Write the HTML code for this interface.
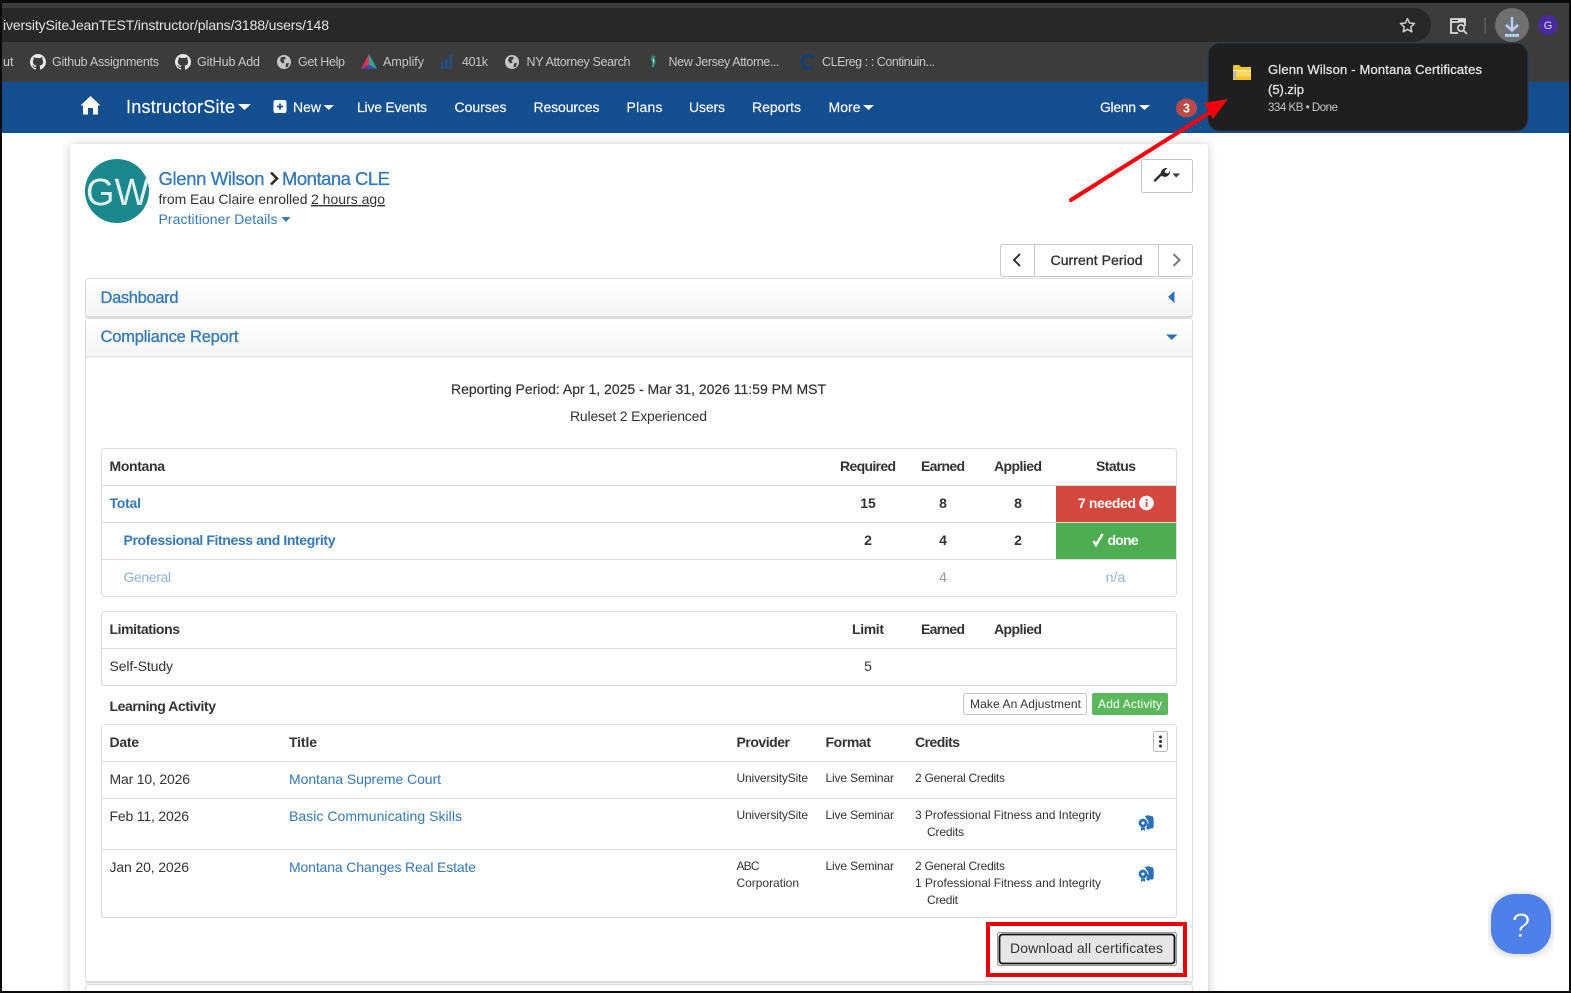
<!DOCTYPE html>
<html lang="en"><head><meta charset="utf-8"><title>InstructorSite</title>
<style>
html,body{margin:0;padding:0;background:#fff;width:1571px;height:993px;overflow:hidden}
svg{display:block;position:absolute;left:0;top:0}
text{font-family:"Liberation Sans",sans-serif;font-size:14px;fill:#333}
.b{font-weight:bold}
.m{stroke:#333;stroke-width:.35}
.a{fill:#337ab7}
.a.m{stroke:#337ab7;stroke-width:.3}
.p{stroke:#e3e3e3;stroke-width:.3}
.n{fill:#fff;stroke:#fff;stroke-width:.15}
.bm{fill:#c7c7c7;font-size:12.5px}
.s{font-size:12px}
.c{text-anchor:middle}
</style></head><body>
<svg width="1571" height="993" viewBox="0 0 1571 993" xmlns="http://www.w3.org/2000/svg">
<defs>
<filter id="sh" x="-5%" y="-5%" width="110%" height="110%"><feDropShadow dx="0" dy="1" stdDeviation="5" flood-color="#000" flood-opacity=".22"/></filter>
<linearGradient id="ph" x1="0" y1="0" x2="0" y2="1"><stop offset="0" stop-color="#fff"/><stop offset="1" stop-color="#f4f4f4"/></linearGradient>
<path id="gh" d="M8 0C3.58 0 0 3.58 0 8c0 3.54 2.29 6.53 5.47 7.59.4.07.55-.17.55-.38 0-.19-.01-.82-.01-1.49-2.01.37-2.53-.49-2.69-.94-.09-.23-.48-.94-.82-1.13-.28-.15-.68-.52-.01-.53.63-.01 1.08.58 1.23.82.72 1.21 1.87.87 2.33.66.07-.52.28-.87.51-1.07-1.78-.2-3.64-.89-3.64-3.95 0-.87.31-1.59.82-2.15-.08-.2-.36-1.02.08-2.12 0 0 .67-.21 2.2.82.64-.18 1.32-.27 2-.27.68 0 1.36.09 2 .27 1.53-1.04 2.2-.82 2.2-.82.44 1.1.16 1.92.08 2.12.51.56.82 1.27.82 2.15 0 3.07-1.87 3.75-3.65 3.95.29.25.54.73.54 1.48 0 1.07-.01 1.93-.01 2.2 0 .21.15.46.55.38A8.013 8.013 0 0016 8c0-4.42-3.58-8-8-8z" fill="#e8e8e8"/>
<g id="gl"><circle cx="7" cy="7" r="7" fill="#c4c7c5"/><path d="M4 2.2 8 1.6 8.8 4 6.4 5 7.6 7.2 5.6 8.6 3 5.6ZM9 8.4 12 8 11 11.6 8.6 12.6Z" fill="#3c3c3c"/></g>
<g id="aw"><path d="M7 1.5C8 .5 9.5 0 11 .5L15 1.5C15.6 3 16 6 15.6 11.5 15.6 13 15 13.5 14 13.5H8V3Z" fill="#2a72b5"/><circle cx="5" cy="8" r="4.9" fill="#2a72b5" stroke="#fff" stroke-width="1"/><circle cx="5" cy="8" r="1.5" fill="#fff"/><path d="M3 12.5V16L5 14.8 7 16V12.5Z" fill="#2a72b5"/><path d="M9 8 11.5 9.5V14.5H9Z" fill="#2a72b5"/></g>
</defs>

<rect width="1571" height="993" fill="#fff"/>

<!-- browser chrome -->
<rect x="0" y="0" width="1571" height="82" fill="#3c3c3c"/>
<path d="M0 8H1414a17 17 0 0 1 0 34H0Z" fill="#282828"/>
<text x="3" y="30" textLength="326" style="fill:#e3e3e3;font-size:14px">iversitySiteJeanTEST/instructor/plans/3188/users/148</text>
<path d="M1407.500 18.500l2 4.500 5 .5-3.700 3.400 1 4.900-4.300-2.500-4.300 2.500 1-4.900-3.700-3.400 5-.5Z" fill="none" stroke="#d0d0d0" stroke-width="1.500" stroke-linejoin="round"/>
<path d="M1465 26V19H1451V33H1458M1451 22H1459" fill="none" stroke="#dcdcdc" stroke-width="1.800"/><rect x="1458" y="19" width="8" height="3.500" fill="#dcdcdc"/><circle cx="1461" cy="28" r="3.200" fill="none" stroke="#dcdcdc" stroke-width="1.600"/><path d="M1463.500 30.500 1467 34" stroke="#dcdcdc" stroke-width="1.600"/>
<rect x="1484.500" y="17" width="1.500" height="17" fill="#5c5c5c"/>
<circle cx="1512" cy="25" r="17" fill="#6f7072"/>
<path d="M1512 17V30M1506 25 1512 30.500 1518 25" fill="none" stroke="#b3cdf3" stroke-width="2.600"/><rect x="1505" y="34" width="14" height="2.800" fill="#b3cdf3"/>
<circle cx="1548" cy="25" r="10" fill="#4a2a9f"/>
<text x="1548" y="29" class="c" style="fill:#e6e0f5;font-size:11px">G</text>

<!-- bookmarks -->
<text x="3" y="66" class="bm">ut</text>
<use href="#gh" x="30" y="54"/>
<text x="52" y="66" textLength="107" class="bm">Github Assignments</text>
<use href="#gh" x="175" y="54"/>
<text x="197" y="66" textLength="63" class="bm">GitHub Add</text>
<use href="#gl" x="277" y="55"/>
<text x="298" y="66" textLength="47" class="bm">Get Help</text>
<path d="M369 54 361 69 369 65Z" fill="#e8314a"/><path d="M369 54 377 69 369 65Z" fill="#2aa6a0"/><path d="M361 69 369 65 377 69Z" fill="#3a4cb0"/>
<text x="383" y="66" textLength="41" class="bm">Amplify</text>
<path d="M441 62h2.500v7H441ZM445 59h2.500v10H445ZM449.500 55h2.500v14h-2.500Z" fill="#22508f"/>
<text x="462" y="66" textLength="26" class="bm">401k</text>
<use href="#gl" x="505" y="55"/>
<text x="526.500" y="66" textLength="104" class="bm">NY Attorney Search</text>
<path d="M652 55.500 655.500 56 654.500 59.500 656 62 653.500 68 651.500 66 652.500 62 650.500 60Z" fill="#2b8f7c"/><path d="M653 58.500 654.500 60 653 64Z" fill="#e8e8e8"/>
<text x="668.500" y="66" textLength="111" class="bm">New Jersey Attorne...</text>
<path d="M813 57.500A6.500 6.500 0 1 0 813 66.500" fill="none" stroke="#0f4077" stroke-width="3"/><path d="M806 56 814 55" stroke="#0f4077" stroke-width="2"/>
<text x="822" y="66" textLength="113" class="bm">CLEreg : : Continuin...</text>

<!-- nav -->
<rect x="0" y="82" width="1571" height="51" fill="#134f8e"/>
<path d="M80.500 105.500 90.500 96 100.500 105.500 98 105.500V114.500H93V108H88V114.500H83V105.500Z" fill="#fff"/>
<text x="126" y="113" textLength="109" class="n" style="font-size:18px">InstructorSite</text>
<path d="M238 104H251L244.500 110Z" fill="#fff"/>
<rect x="273.500" y="100" width="13" height="13" rx="2" fill="#fff"/><path d="M280 103.500V109.500M277 106.500H283" stroke="#134f8e" stroke-width="1.800"/>
<text x="293" y="112" textLength="28" class="n">New</text><path d="M323.500 105H334L328.700 110Z" fill="#fff"/>
<text x="357" y="112" textLength="70" class="n">Live Events</text>
<text x="454.500" y="112" textLength="52" class="n">Courses</text>
<text x="533.500" y="112" textLength="66" class="n">Resources</text>
<text x="626.500" y="112" textLength="36" class="n">Plans</text>
<text x="689" y="112" textLength="36" class="n">Users</text>
<text x="752" y="112" textLength="49" class="n">Reports</text>
<text x="828.500" y="112" textLength="32" class="n">More</text><path d="M863 105H874L868.500 110Z" fill="#fff"/>
<text x="1100" y="112" textLength="36" class="n">Glenn</text><path d="M1139 105H1150L1144.500 110Z" fill="#fff"/>
<ellipse cx="1186.500" cy="108" rx="10.500" ry="9.500" fill="#b94a48"/>
<text x="1186.500" y="112.500" class="c b" style="fill:#fff;font-size:12.500px">3</text>

<!-- main card -->
<rect x="70" y="144" width="1138" height="860" rx="4" fill="#fff" filter="url(#sh)"/>
<circle cx="117" cy="191" r="32" fill="#1a888c"/>
<text x="86" y="205" textLength="63" style="fill:#e2f1f1;font-size:38px" lengthAdjust="spacingAndGlyphs">GW</text>
<text x="158.500" y="185" textLength="106" class="a m" style="font-size:18.500px">Glenn Wilson</text>
<path d="M271 172.500 277 178.500 271 184.500" fill="none" stroke="#2c2c2c" stroke-width="2.600"/>
<text x="282" y="185" textLength="108" class="a m" style="font-size:18.500px">Montana CLE</text>
<text x="158.500" y="204" textLength="149">from Eau Claire enrolled</text>
<text x="311" y="204" textLength="74" text-decoration="underline">2 hours ago</text>
<text x="158.500" y="224" textLength="119" class="a">Practitioner Details</text>
<path d="M281.500 217H290.500L286 222Z" fill="#337ab7"/>

<rect x="1141.500" y="159.500" width="51" height="33" rx="2" fill="#fff" stroke="#c4c4c4"/>
<path d="M1155 180.500 1162.500 173" stroke="#2b2b2b" stroke-width="2.300" stroke-linecap="round"/><path d="M1161 175.500C1160 171 1163 167.500 1167.500 168L1164.500 171 1165.500 173 1168 173.500 1170 171C1170.500 175 1166.500 178 1163 176.500Z" fill="#2b2b2b"/>
<path d="M1172.500 173.500H1180L1176.200 177.500Z" fill="#333"/>

<rect x="1000.500" y="244.500" width="192" height="32" rx="2" fill="#fff" stroke="#c8c8c8"/>
<path d="M1034.500 245V276M1158.500 245V276" stroke="#c8c8c8"/>
<path d="M1020 254 1014 260 1020 266" fill="none" stroke="#333" stroke-width="2"/>
<path d="M1173.500 254 1179.500 260 1173.500 266" fill="none" stroke="#777" stroke-width="2"/>
<text x="1050.500" y="265" textLength="92" class="m">Current Period</text>

<!-- panels -->
<rect x="85.500" y="278.500" width="1107" height="38" rx="3" fill="url(#ph)" stroke="#dcdcdc"/>
<rect x="85.500" y="316" width="1107" height="2" fill="#ddd"/>
<text x="100.500" y="303" textLength="78" class="a m" style="font-size:16.500px">Dashboard</text>
<path d="M1174.500 291V303L1168 297Z" fill="#2a72b5"/>
<rect x="85.500" y="318.500" width="1107" height="664" rx="3" fill="#fff" stroke="#dcdcdc"/>
<rect x="86" y="319" width="1106" height="37.500" fill="url(#ph)"/>
<rect x="86" y="356.500" width="1106" height="1" fill="#dcdcdc"/>
<text x="100.500" y="342" textLength="138" class="a m" style="font-size:16.500px">Compliance Report</text>
<path d="M1166 334.500H1177.500L1171.700 340Z" fill="#2a72b5"/>
<rect x="85.500" y="981" width="1107" height="2.500" fill="#dcdcdc"/>
<rect x="85.500" y="984.500" width="1107" height="20" rx="3" fill="#fff" stroke="#dcdcdc"/>

<text x="451" y="394" textLength="375" class="m" style="stroke-width:.2">Reporting Period: Apr 1, 2025 - Mar 31, 2026 11:59 PM MST</text>
<text x="570" y="421" textLength="137">Ruleset 2 Experienced</text>

<!-- table 1 -->
<rect x="101.500" y="448.500" width="1075" height="148" rx="3" fill="#fff" stroke="#ddd"/>
<path d="M102 485.500H1176M102 522.500H1176M102 559.500H1176" stroke="#ddd"/>
<text x="109.500" y="471" textLength="55.500" class="b">Montana</text>
<text x="840" y="471" textLength="56" class="b">Required</text>
<text x="921" y="471" textLength="44" class="b">Earned</text>
<text x="994" y="471" textLength="48" class="b">Applied</text>
<text x="1096" y="471" textLength="40" class="b">Status</text>
<text x="109.500" y="508" textLength="31.500" class="b a">Total</text>
<text x="868" y="508" class="b c">15</text><text x="943" y="508" class="b c">8</text><text x="1018" y="508" class="b c">8</text>
<rect x="1056" y="486" width="120" height="36" fill="#d4483f"/>
<text x="1078" y="508" textLength="58" class="b" style="fill:#fff">7 needed</text>
<circle cx="1146.500" cy="503" r="7.300" fill="#fff"/><rect x="1145.700" y="499" width="1.800" height="1.800" fill="#d4483f"/><rect x="1145.700" y="502" width="1.800" height="5" fill="#d4483f"/>
<text x="123.500" y="545" textLength="212" class="b a">Professional Fitness and Integrity</text>
<text x="868" y="545" class="b c">2</text><text x="943" y="545" class="b c">4</text><text x="1018" y="545" class="b c">2</text>
<rect x="1056" y="523" width="120" height="36" fill="#4cae50"/>
<path d="M1093.500 541 1096 545 1102.500 534" fill="none" stroke="#fff" stroke-width="2.500"/>
<text x="1107.500" y="545" textLength="31" class="b" style="fill:#fff">done</text>
<text x="123.500" y="582" textLength="47.500" style="fill:#8fb3d6">General</text>
<text x="943" y="582" class="c" style="fill:#a89098">4</text>
<text x="1115.500" y="582" class="c" style="fill:#8fb3d6">n/a</text>

<!-- table 2 -->
<rect x="101.500" y="611.500" width="1075" height="74" rx="3" fill="#fff" stroke="#ddd"/>
<path d="M102 648.500H1176" stroke="#ddd"/>
<text x="109.500" y="634" textLength="70.500" class="b">Limitations</text>
<text x="852" y="634" textLength="32" class="b">Limit</text>
<text x="921" y="634" textLength="44" class="b">Earned</text>
<text x="994" y="634" textLength="48" class="b">Applied</text>
<text x="109.500" y="671" textLength="63.500">Self-Study</text>
<text x="868" y="671" class="c">5</text>

<text x="109.500" y="711" textLength="106.500" class="b">Learning Activity</text>
<rect x="963.500" y="693.500" width="123" height="21" rx="2" fill="#fff" stroke="#c4c4c4"/>
<text x="970" y="708" textLength="111" class="s">Make An Adjustment</text>
<rect x="1092" y="693" width="76" height="22" rx="2" fill="#5cb85c"/>
<text x="1098" y="708" textLength="64" class="s" style="fill:#fff">Add Activity</text>

<!-- table 3 -->
<rect x="101.500" y="724.500" width="1075" height="193" rx="3" fill="#fff" stroke="#ddd"/>
<path d="M102 761.500H1176M102 798.500H1176M102 849.500H1176" stroke="#ddd"/>
<text x="109.500" y="747" textLength="29.500" class="b">Date</text>
<text x="289" y="747" textLength="28" class="b">Title</text>
<text x="736.500" y="747" textLength="53.500" class="b">Provider</text>
<text x="825.500" y="747" textLength="45.500" class="b">Format</text>
<text x="915" y="747" textLength="45" class="b">Credits</text>
<rect x="1153.500" y="731.500" width="14" height="20" rx="2" fill="#fff" stroke="#bbb"/>
<circle cx="1160.500" cy="737" r="1.500" fill="#333"/><circle cx="1160.500" cy="741.500" r="1.500" fill="#333"/><circle cx="1160.500" cy="746" r="1.500" fill="#333"/>

<text x="109.500" y="784" textLength="80.500">Mar 10, 2026</text>
<text x="289" y="784" textLength="152" class="a">Montana Supreme Court</text>
<text x="736.500" y="782" textLength="71.500" class="s">UniversitySite</text>
<text x="825.500" y="782" textLength="68.500" class="s">Live Seminar</text>
<text x="915" y="782" textLength="90" class="s">2 General Credits</text>

<text x="109.500" y="821" textLength="79.500">Feb 11, 2026</text>
<text x="289" y="821" textLength="173" class="a">Basic Communicating Skills</text>
<text x="736.500" y="819" textLength="71.500" class="s">UniversitySite</text>
<text x="825.500" y="819" textLength="68.500" class="s">Live Seminar</text>
<text x="915" y="819" textLength="186" class="s">3 Professional Fitness and Integrity</text>
<text x="927" y="836" textLength="37" class="s">Credits</text>
<use href="#aw" x="1138" y="815"/>

<text x="109.500" y="872" textLength="79.500">Jan 20, 2026</text>
<text x="289" y="872" textLength="187" class="a">Montana Changes Real Estate</text>
<text x="736.500" y="870" textLength="23" class="s">ABC</text>
<text x="736.500" y="887" textLength="62.500" class="s">Corporation</text>
<text x="825.500" y="870" textLength="68.500" class="s">Live Seminar</text>
<text x="915" y="870" textLength="90" class="s">2 General Credits</text>
<text x="915" y="887" textLength="186" class="s">1 Professional Fitness and Integrity</text>
<text x="927" y="904" textLength="31" class="s">Credit</text>
<use href="#aw" x="1138" y="866"/>

<!-- download button with highlight -->
<rect x="988" y="924" width="197" height="51" fill="#fff" stroke="#e8000b" stroke-width="4"/>
<rect x="997.500" y="932.500" width="179" height="33" rx="2" fill="#e6e6e6" stroke="#999"/>
<rect x="999.500" y="934.500" width="175" height="29" rx="3" fill="#e6e6e6" stroke="#111" stroke-width="1.800"/>
<text x="1010" y="953" textLength="153">Download all certificates</text>

<!-- download popup -->
<rect x="1208" y="43" width="320" height="88" rx="12" fill="#1f1f1f" stroke="#2d3a46" stroke-width="1"/>
<path d="M1233 80V66.500C1233 65.500 1233.500 65 1234.500 65H1239L1241 67H1251V80Z" fill="#f4c430"/>
<rect x="1233" y="70" width="18" height="1.500" fill="#fdf0b0"/><rect x="1233" y="72" width="18" height="4.500" fill="#ffd65a"/><rect x="1233" y="71" width="3" height="8" fill="#b8b8b0"/>
<text x="1268" y="74" textLength="214" class="p" style="fill:#e3e3e3;font-size:13px">Glenn Wilson - Montana Certificates</text>
<text x="1268" y="94" textLength="36" class="p" style="fill:#e3e3e3;font-size:13px">(5).zip</text>
<text x="1268" y="111" textLength="70" style="fill:#c4c7c5;font-size:11.500px">334 KB • Done</text>

<!-- red arrow -->
<path d="M1071 200 1217 108" stroke="#f5000a" stroke-width="4" stroke-linecap="round"/>
<path d="M1228 99 1204 103 1213 119Z" fill="#f5000a"/>

<!-- help -->
<rect x="1491" y="894" width="60" height="60" rx="24" fill="#5080ea" filter="url(#sh)"/>
<text x="1521" y="937" class="c" style="fill:#fff;font-size:34px;stroke:#5080ea;stroke-width:.7">?</text>

<!-- screenshot frame -->
<path fill-rule="evenodd" d="M0 0H1571V993H0ZM2 3V991H1569V3Z" fill="#0a0a0a"/>
</svg>
</body></html>
